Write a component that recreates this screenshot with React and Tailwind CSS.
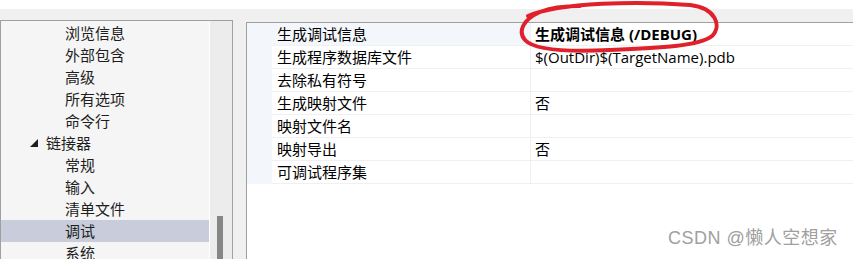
import React from "react";

const treeItems = [
  { label: "浏览信息", level: 2 },
  { label: "外部包含", level: 2 },
  { label: "高级", level: 2 },
  { label: "所有选项", level: 2 },
  { label: "命令行", level: 2 },
  { label: "链接器", level: 1, expanded: true },
  { label: "常规", level: 2 },
  { label: "输入", level: 2 },
  { label: "清单文件", level: 2 },
  { label: "调试", level: 2, selected: true },
  { label: "系统", level: 2 },
];

const props = [
  { name: "生成调试信息", value: "生成调试信息 (/DEBUG)", bold: true, active: true },
  { name: "生成程序数据库文件", value: "$(OutDir)$(TargetName).pdb" },
  { name: "去除私有符号", value: "" },
  { name: "生成映射文件", value: "否" },
  { name: "映射文件名", value: "" },
  { name: "映射导出", value: "否" },
  { name: "可调试程序集", value: "" },
];

function TreeRow({ item }) {
  return (
    <div
      className={
        "flex items-center h-[22px] shrink-0 " +
        (item.selected ? "bg-[#c9ccda]" : "")
      }
    >
      {item.level === 1 ? (
        <div className="flex items-center pl-[29px]">
          <svg width="8" height="8" viewBox="0 0 8 8" className="mr-[8px]">
            <polygon points="8,0 8,8 0,8" fill="#1e1e1e" />
          </svg>
          <span>{item.label}</span>
        </div>
      ) : (
        <span className="pl-[64px]">{item.label}</span>
      )}
    </div>
  );
}

function PropRow({ p }) {
  return (
    <div className="flex h-[23px] shrink-0">
      <div className="w-[25px] bg-[#f3f6fb]" />
      <div
        className={
          "w-[259px] flex items-center pl-[5px] border-b border-r border-[#eef0f4] " +
          (p.active ? "bg-[#f3f6fb]" : "bg-white")
        }
      >
        {p.name}
      </div>
      <div
        className={
          "flex-1 flex items-center pl-[4px] border-b border-[#eef0f4] bg-white " +
          (p.bold ? "font-bold" : "")
        }
      >
        {p.value}
      </div>
    </div>
  );
}

export default function App() {
  return (
    <div className="relative w-[853px] h-[259px] overflow-hidden bg-[#f0f0f0] text-[15px] text-[#1e1e1e] leading-none font-['Open_Sans','Noto_Sans_CJK_SC',sans-serif]">
      <div className="h-[9px] bg-white" />
      <div className="flex pt-[11px] h-[250px]">
        {/* navigation tree */}
        <div className="w-[233px] h-full flex border-l border-t border-r border-[#a0a0a0] bg-[#f5f5f5]">
          <div className="w-[209px] flex flex-col pt-px border-r border-white">
            {treeItems.map((item, i) => (
              <TreeRow key={i} item={item} />
            ))}
          </div>
          <div className="flex-1 bg-[#ececec] pt-[195px] pl-[7px]">
            <div className="w-[6px] h-full bg-[#868686]" />
          </div>
        </div>

        {/* property grid */}
        <div className="ml-[13px] mt-[2px] flex-1 flex flex-col border-l border-t border-[#a0a0a0] bg-white text-black">
          {props.map((p, i) => (
            <PropRow key={i} p={p} />
          ))}
        </div>
      </div>

      {/* red annotation */}
      <svg
        className="absolute left-0 top-0 pointer-events-none"
        width="853"
        height="259"
        viewBox="0 0 853 259"
      >
        <path
          d="M 528 16 C 560 2, 640 1, 690 5 C 716 8, 722 26, 712 36 C 700 46, 660 48, 610 50 C 570 52, 535 51, 525 40 C 518 32, 522 20, 540 12 C 552 7, 568 6, 580 6"
          fill="none"
          stroke="#e0202a"
          strokeWidth="4"
          strokeLinecap="round"
        />
      </svg>

      {/* watermark */}
      <div className="absolute left-[668px] top-[229px] text-[18px] tracking-[0.5px] text-[#a0a0a0] font-['Liberation_Sans','Noto_Sans_CJK_SC',sans-serif] [text-shadow:0_0_2px_#ffffff]">
        CSDN @懒人空想家
      </div>
    </div>
  );
}
